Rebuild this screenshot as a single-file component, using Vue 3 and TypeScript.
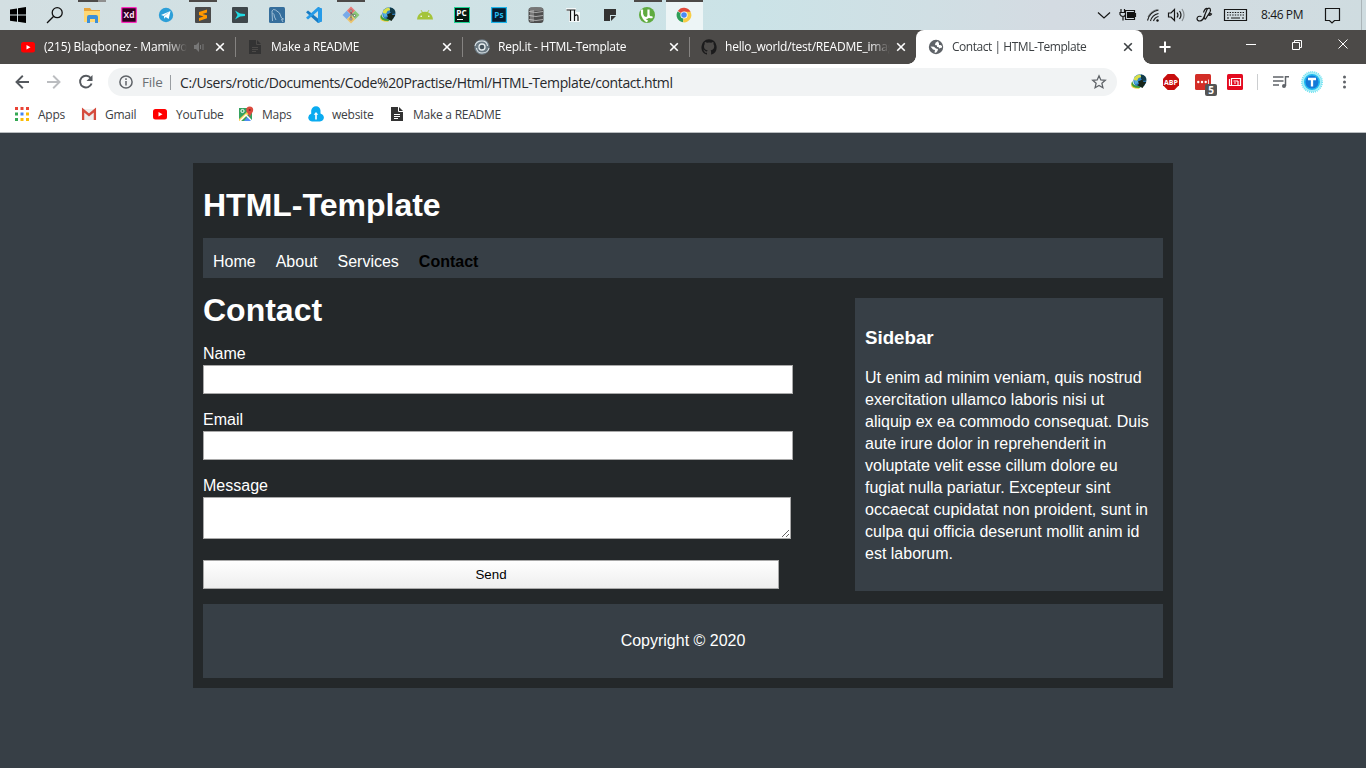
<script setup lang="ts">
interface Glyph {
  text: string
  x: number
  y: number
  size: number
  color: string
}

interface Tab {
  title: string
  icon: string
  active?: boolean
  audio?: boolean
  spacing: number
}

const taskbarIcons: { id: string; state?: string; glyph?: Glyph }[] = [
  { id: 'windows' },
  { id: 'search' },
  { id: 'folder', state: 'stacked' },
  { id: 'xd', glyph: { text: 'Xd', x: 3.6, y: 12.2, size: 8.5, color: '#ffd9f2' } },
  { id: 'telegram' },
  { id: 'sublime', state: 'open' },
  { id: 'filmora' },
  { id: 'mysql' },
  { id: 'vscode' },
  { id: 'git', state: 'open' },
  { id: 'idm' },
  { id: 'android' },
  { id: 'pycharm', glyph: { text: 'PC', x: 3.3, y: 9.6, size: 8.2, color: '#fff' } },
  { id: 'photoshop', glyph: { text: 'Ps', x: 4.3, y: 12, size: 8.2, color: '#25b8eb' } },
  { id: 'database' },
  { id: 'thonny' },
  { id: 'note' },
  { id: 'utorrent', state: 'open' },
  { id: 'chrome', state: 'focused' },
]

const tabs: Tab[] = [
  { title: '(215) Blaqbonez - Mamiwota', icon: 'youtube', audio: true, spacing: -0.2 },
  { title: 'Make a README', icon: 'doc', spacing: -0.24 },
  { title: 'Repl.it - HTML-Template', icon: 'replit', spacing: -0.25 },
  { title: 'hello_world/test/README_image', icon: 'github', spacing: -0.2 },
  { title: 'Contact | HTML-Template', icon: 'globe', active: true, spacing: -0.46 },
]

const bookmarks = [
  { label: 'Apps', icon: 'apps', width: 67 },
  { label: 'Gmail', icon: 'gmail', width: 71 },
  { label: 'YouTube', icon: 'youtube', width: 86 },
  { label: 'Maps', icon: 'maps', width: 70 },
  { label: 'website', icon: 'cloud', width: 81 },
  { label: 'Make a README', icon: 'doc', width: 130 },
]

const links = ['Home', 'About', 'Services', 'Contact']
</script>

<template>
  <div class="screen">
    <svg class="defs" aria-hidden="true">
      <symbol id="windows" viewBox="0 0 18 18">
        <path fill="#000" d="M1 3.500 8 2.400V8.600H1zM9 2.300 17 1v7.600H9zM1 9.500h7v6.200L1 14.700zM9 9.500h8V17l-8-1.200z" />
      </symbol>
      <symbol id="search" viewBox="0 0 18 18">
        <g fill="none" stroke="#111" stroke-width="1.300"><circle cx="11.200" cy="6.700" r="5" /><path d="M7.700 10.300 1 17" /></g>
      </symbol>
      <symbol id="folder" viewBox="0 0 18 18">
        <path fill="#e8a33a" d="M1 2h6l1.500 2H17v3H1z" />
        <path fill="#ffd874" d="M1 5h16v11H1z" />
        <path fill="#3c8fd8" d="M4 11q0-2 2-2h7q2 0 2 2v6h-3v-4H7v4H4z" />
      </symbol>
      <symbol id="xd" viewBox="0 0 18 18">
        <rect x="1.700" y="1.700" width="14.600" height="14.600" rx=".6" fill="#2e001e" stroke="#ff2bc2" stroke-width="1.200" />
      </symbol>
      <symbol id="telegram" viewBox="0 0 18 18">
        <circle cx="9" cy="9" r="7.200" fill="#2d9fd8" />
        <path fill="#fff" d="M4 9 13.500 5l-1.800 8-3-2-1.500 1.700-.2-2.700z" />
        <path fill="none" stroke="#9cc9e2" d="m7 10 4.500-3.500" stroke-width=".8" />
      </symbol>
      <symbol id="sublime" viewBox="0 0 18 18">
        <rect x="1" y="1" width="16" height="16" rx="1" fill="#4a4a4a" />
        <path fill="#ff9800" d="m5 6 8-2.500v3L8.500 8 13 9.300v3L5 15v-3l4.500-1.500L5 9z" />
      </symbol>
      <symbol id="filmora" viewBox="0 0 18 18">
        <rect x="1" y="1" width="16" height="16" rx="1" fill="#3e464a" />
        <path fill="#20dbe4" d="m4 4.500 5 3 5 .5v2l-5 .5-5 3 2.500-4.500z" />
      </symbol>
      <symbol id="mysql" viewBox="0 0 18 18">
        <rect x="1" y="1" width="16" height="16" rx="1.500" fill="#356e9c" />
        <path fill="none" stroke="#a8c5da" stroke-width=".9" d="M4.500 15 4 5Q5 2.500 7.500 4q5 2 6 8l2 1-2 .5 1.500 2.500M4.500 7q2 1 2 4l1.500 3" />
      </symbol>
      <symbol id="vscode" viewBox="0 0 18 18">
        <path fill="#187bc2" d="m13 1 4 1.800v12.400L13 17 1 6.200 3 4.500 13 12.500z" />
        <path fill="#269be8" d="m13 1 4 1.800v12.400L13 17V5L3 13.500l-2-1.700z" />
      </symbol>
      <symbol id="git" viewBox="0 0 18 18">
        <g transform="rotate(45 9 9)">
          <path fill="#e87878" d="M3 3h6v6H3z" /><path fill="#8ac978" d="M9 3h6v6H9z" />
          <path fill="#78aae8" d="M3 9h6v6H3z" /><path fill="#ecc46e" d="M9 9h6v6H9z" />
        </g>
        <path d="M9 4v10m0-7 3 2.500" fill="none" stroke="#555" stroke-width=".8" />
        <g fill="#fff" stroke="#555" stroke-width=".7"><circle cx="9" cy="5" r="1.100" /><circle cx="12.500" cy="9.500" r="1.100" /><circle cx="9" cy="13" r="1.100" /></g>
      </symbol>
      <symbol id="idm" viewBox="0 0 18 18">
        <circle cx="9.800" cy="7.800" r="6.500" fill="#2d7fc4" />
        <path fill="#d9df4a" d="M4 5Q6.500 1.500 10 1.500l1.500 2.500-3 1-1.500 3-3-.5z" />
        <path fill="#55aede" d="m4 7 4 1 1 2-4 1z" />
        <path fill="#f0cf38" d="M2 9q-.5 4 4 5l4 .8-1 1q-8 .2-8-4.300z" />
        <path fill="#3f9f38" d="M2.500 8Q2.500 12 7 13l4 .5L9.500 15Q1 15 1.500 10z" />
        <path fill="#123c4a" d="M11 1.500q5.500.5 5.500 6l-3 .5-2.500-2z" />
        <path fill="#17251a" d="m8 8.500 4.500-2 1 2.500 3-.3L12.500 15 7 12l2-1z" />
      </symbol>
      <symbol id="android" viewBox="0 0 18 18">
        <path fill="#a4c439" d="M1 13.500Q1.500 8 6 6.200L4.600 4.300l.6-.4L6.800 6q2.200-.7 4.400 0l1.600-2.100.6.400L12 6.200q4.500 1.800 5 7.300z" />
        <g fill="#fff"><circle cx="5.200" cy="10.300" r=".8" /><circle cx="12.800" cy="10.300" r=".8" /></g>
      </symbol>
      <symbol id="pycharm" viewBox="0 0 18 18">
        <rect x="1.500" y="1.500" width="15" height="15" fill="#071a12" stroke="#1fd494" />
        <path fill="#fff" d="M4 13h6v1H4z" />
      </symbol>
      <symbol id="photoshop" viewBox="0 0 18 18">
        <rect x="1.600" y="1.600" width="14.800" height="14.800" fill="#071d31" stroke="#1db6ec" stroke-width="1.200" />
      </symbol>
      <symbol id="database" viewBox="0 0 18 18">
        <rect x="1.500" y="1.500" width="15" height="15.500" rx="3" fill="#4e4e4e" />
        <path stroke="#aaa" stroke-width="1" fill="none" d="M2 5.500q7 2 14 0M2 9.500q7 2 14 0M2 13.500q7 2 14 0" />
        <ellipse cx="9" cy="3" rx="7.300" ry="2" fill="#777" /><path fill="#fff" opacity=".25" d="M3 4h4v12H3z" />
      </symbol>
      <symbol id="thonny" viewBox="0 0 18 18">
        <path fill="#fff" d="M2 2h10v4h4v10H5V5H2z" opacity=".8" />
        <path fill="none" stroke="#111" stroke-width="1.200" d="M2.500 4h9M6.500 4v11M10.500 4v11m0-5q3.500-2.500 3.500 1v4" />
      </symbol>
      <symbol id="note" viewBox="0 0 18 18">
        <path fill="#333" d="M3 3h12v6H9v6H3z" /><path fill="#333" d="M10 10h5l-5 5z" />
      </symbol>
      <symbol id="utorrent" viewBox="0 0 18 18">
        <circle cx="9" cy="9" r="8" fill="#5fab40" />
        <path fill="none" stroke="#fff" stroke-width="2.200" d="M4 3.500V8q.5 4 4 4 2.500 0 2.500-3V3.500M10.500 9q.5 3 4 2M4.500 9q1 4.500 5 6.500" />
      </symbol>
      <symbol id="chrome" viewBox="0 0 18 18">
        <path fill="#e24a3b" d="M9 9 2.800 5A7.300 7.300 0 0 1 15.600 6z" />
        <path fill="#2f9e58" d="M9 9 8 16.200A7.300 7.300 0 0 1 2.500 5.400z" />
        <path fill="#f7cd45" d="M9 9 9 5.700h6.500A7.300 7.300 0 0 1 8 16.300z" />
        <circle cx="9" cy="9" r="3.600" fill="#fff" /><circle cx="9" cy="9" r="2.800" fill="#4a8af4" />
      </symbol>
      <symbol id="youtube" viewBox="0 0 16 16">
        <rect x="1" y="3" width="14" height="10.500" rx="2.500" fill="#f00" /><path fill="#fff" d="m6.500 6 4 2.250-4 2.250z" />
      </symbol>
      <symbol id="doc" viewBox="0 0 16 16">
        <path fill="#333" d="M2 1h8l4 4v10H2z" /><path fill="none" stroke="var(--paper, #fff)" d="M9.500 1v4.500H14M5 8.500h6M5 10.500h6M5 12.500h4" />
      </symbol>
      <symbol id="replit" viewBox="0 0 16 16">
        <circle cx="8" cy="8" r="7.700" fill="#6a7983" />
        <g fill="none" stroke="#dfe6ea" stroke-width="1.100"><path d="M1 7Q2 2 8 2q5 0 5.500 5M15 9q-1 5-7 5-5 0-5.500-5" /></g>
        <circle cx="8" cy="8" r="3" fill="#44525c" stroke="#e8eef0" stroke-width="1.300" />
      </symbol>
      <symbol id="github" viewBox="0 0 16 16">
        <path fill="#1b1b1c" d="M8 .2a8 8 0 0 0-2.500 15.400c.4.1.5-.2.500-.4v-1.500c-2 .4-2.500-.9-2.600-1.300-.1-.2-.5-.9-.9-1.100-.3-.2-.7-.6 0-.6s1.100.6 1.300.9c.7 1.200 1.900.9 2.400.7.100-.5.300-.9.500-1.100-1.800-.2-3.700-.9-3.700-4 0-.9.300-1.600.8-2.100-.1-.2-.4-1 .100-2.100 0 0 .7-.2 2.200.8a7.600 7.600 0 0 1 4 0c1.500-1 2.200-.8 2.200-.8.500 1.100.2 1.900.1 2.100.5.500.8 1.200.8 2.100 0 3.100-1.900 3.800-3.700 4 .3.300.6.800.6 1.500v2.500c0 .2.100.5.500.4A8 8 0 0 0 8 .2" />
      </symbol>
      <symbol id="globe" viewBox="0 0 16 16">
        <circle cx="8" cy="8" r="7.200" fill="#5f6368" />
        <path fill="#fff" d="M10 2.300 7.500 3.800 7 6l2 .5V8h1.500L11 9.500l3-1V7l-1.500-1H11V4.500zM2.500 7.500 6 7.800l2 1.700 2 .5-.5 2L8 13.800l-1.500-.3L7 11 5 10.500z" />
      </symbol>
      <symbol id="apps" viewBox="0 0 16 16">
        <path fill="#ea4335" d="M1 1h3v3H1zM6.500 1h3v3h-3zM12 1h3v3h-3z" />
        <path fill="#34a853" d="M1 6.500h3v3H1zM1 12h3v3H1z" /><path fill="#4285f4" d="M6.500 6.500h3v3h-3z" />
        <path fill="#fbbc05" d="M12 6.500h3v3h-3zM6.500 12h3v3h-3zM12 12h3v3h-3z" />
      </symbol>
      <symbol id="gmail" viewBox="0 0 16 16">
        <path fill="#eee" d="M1 3h14v11H1z" /><path fill="none" stroke="#d54b3d" stroke-width="2.300" d="M2.100 14V4L8 9l5.900-5v10" />
      </symbol>
      <symbol id="maps" viewBox="0 0 16 16">
        <path fill="#35a261" d="M1 2h13v13H1z" /><path fill="#4f8df5" d="m6 15 4-5 4 5z" /><path fill="#f5d050" d="m1 13 9-8 2 2-9 8H1z" />
        <path fill="none" stroke="#fff" stroke-width="1.300" d="m2 15 6-6 6 6" /><circle cx="4.500" cy="5" r="1.600" fill="none" stroke="#fff" />
        <path fill="#dd4b3e" d="M8.200 4a3.500 3.500 0 0 1 7 0q0 2-2 4l-1.500 3-1.500-3q-2-2-2-4" /><circle cx="11.700" cy="4" r="1.100" fill="#8a2924" />
      </symbol>
      <symbol id="cloud" viewBox="0 0 16 16">
        <path fill="#0aabf0" d="M4 15.500q-3.500-.5-3.800-4 .3-3 3-3.800V4.500Q4 .5 8 .3q4 .2 4.500 4.200v3q3.200 1 3.400 4-.2 3.500-4 4z" />
        <path fill="#fff" d="M8 6 10.300 8.800H8.800v4.700H7.200V8.800H5.700z" />
      </symbol>
    </svg>

    <header class="taskbar">
      <div class="launchers">
        <span v-for="item in taskbarIcons" :key="item.id" class="launcher" :class="item.state">
          <svg width="18" height="18" viewBox="0 0 18 18">
            <use :href="'#' + item.id" />
            <text v-if="item.glyph" class="glyph" :x="item.glyph.x" :y="item.glyph.y" :font-size="item.glyph.size" :fill="item.glyph.color">{{ item.glyph.text }}</text>
          </svg>
        </span>
      </div>
      <div class="tray">
        <svg width="242" height="30" viewBox="1094 0 242 30" fill="none" stroke="#161616" stroke-width="1.200">
          <path d="m1098 12.500 6 5.500 6-5.500" />
          <path d="M1125.500 10.500h9v9h-9zM1135.500 13v4M1121 9v3M1124.500 9v3M1120 12.500h5.500v2q-.5 2-2.500 2t-3-2zM1123 16.500v4" />
          <path fill="#111" stroke="none" d="M1127 12h7v6h-7z" />
          <g stroke-width="1.100"><path d="M1147.500 20.500q2-8.500 11-10.500M1150.500 21q1.500-6 8-7.500M1153.500 21q1-3.500 5-4.500" /><path d="M1148 17q3-6 9.500-7.500" opacity=".5" /></g>
          <circle cx="1157.500" cy="20.500" r="1.200" fill="#111" stroke="none" />
          <path d="M1168.500 13h2.500l3.500-3.500v11L1171 17h-2.500zM1177 12.500q2 2.500 0 5M1179.500 11q3 4 0 8" /><path opacity=".4" d="M1182 9q4 6 0 12" />
          <path d="M1201.500 16.500q-4-1-4.500 2 0 2.500 3 2.500 3-.5 4-4l3-7.500q1.500-2 3-1 1 1.500 0 3.500l-4.500 7-1.500-.5 1-4M1203.500 12.500q1.500-4.500 4-4M1208.500 15q1.500-2 3-1-1 2-3 1" />
          <path d="M1224.500 9.500h22v11h-22z" />
          <path stroke-dasharray="1.400 1.200" d="M1227 12.500h17M1227 15h17" /><path d="M1227 18h2m2 0h9m2 0h2" />
          <text class="clock" x="1261" y="19.400" fill="#171717" stroke="none">8:46 PM</text>
          <path d="M1325.500 8.500h14v12h-5l-2.500 2.500-2.500-2.500h-4z" />
        </svg>
        <i class="desktop-edge"></i>
      </div>
    </header>

    <div class="tabstrip">
      <div v-for="tab in tabs" :key="tab.title" class="tab" :class="{ active: tab.active, sounding: tab.audio }">
        <svg class="favicon" width="16" height="16"><use :href="'#' + tab.icon" /></svg>
        <span class="title" :style="{ letterSpacing: tab.spacing + 'px' }">{{ tab.title }}</span>
        <svg v-if="tab.audio" class="audio" width="12" height="12" viewBox="0 0 12 12">
          <path fill="#777" d="M0 4h2l3-3v10L2 8H0z" /><path fill="none" stroke="#777" d="M6.500 4v4M9 3v6" />
        </svg>
        <svg class="close" width="10" height="10" viewBox="0 0 10 10"><path d="m1.200 1.200 7.600 7.600m0-7.600L1.200 8.800" /></svg>
      </div>
      <svg class="new-tab" width="14" height="14" viewBox="0 0 14 14"><path d="M7 1.500v11M1.500 7h11" /></svg>
      <svg class="window-controls" width="108" height="28" viewBox="0 0 108 28" fill="none" stroke="#fff">
        <path d="M0 11.500h10M46.500 9.500h7v7h-7zM48.500 9.500v-2h7v7h-2M92.500 6.500l9 9m0-9-9 9" />
      </svg>
    </div>

    <div class="toolbar">
      <svg class="nav-icons" width="108" height="36" viewBox="0 0 108 36" fill="none" stroke="#55595e" stroke-width="1.900">
        <path d="M29 18H16.500m6.300-6.200L16.500 18l6.300 6.200" />
        <path stroke="#bbbdc0" d="M47 18h12.500m-6.300-6.200 6.300 6.200-6.300 6.200" />
        <path d="M90.700 14a5.900 5.900 0 1 0 .9 5.500" /><path fill="#55595e" stroke="none" d="M92.500 11v6h-6z" />
      </svg>
      <div class="omnibox">
        <svg width="14" height="14" viewBox="0 0 14 14" fill="none" stroke="#5f6368" stroke-width="1.500"><circle cx="7" cy="7" r="6.100" /><path d="M7 6v4.500M7 3.300v1.600" /></svg>
        <span class="scheme">File</span>
        <span class="url">C:/Users/rotic/Documents/Code%20Practise/Html/HTML-Template/contact.html</span>
        <svg class="star" width="16" height="16" viewBox="0 0 16 16"><path fill="none" stroke="#5f6368" stroke-width="1.300" d="m8 1.800 1.800 4.100 4.500.4-3.400 3 1 4.400L8 11.400l-3.900 2.300 1-4.400-3.400-3 4.500-.4z" /></svg>
      </div>
      <div class="extensions">
        <svg width="18" height="18"><use href="#idm" /></svg>
        <svg width="18" height="18" viewBox="0 0 18 18"><path fill="#c70d0d" d="M5.700 1h6.600L17 5.700v6.600L12.300 17H5.700L1 12.300V5.700z" /><text x="2" y="11.800" class="glyph" font-size="7.600" fill="#fff" textLength="14" lengthAdjust="spacingAndGlyphs">ABP</text></svg>
        <span class="lastpass">
          <svg width="18" height="18" viewBox="0 0 18 18"><rect x="1" y="1" width="16" height="16" rx="1.500" fill="#d32d27" /><g fill="#fff"><circle cx="4.300" cy="9" r="1.200" /><circle cx="8" cy="9" r="1.200" /><circle cx="11.700" cy="9" r="1.200" /><path d="M14 6.500h.8v5H14z" /></g></svg>
          <b class="badge">5</b>
        </span>
        <svg width="18" height="18" viewBox="0 0 18 18"><rect x="1" y="1" width="16" height="16" rx="1.500" fill="#e40b20" /><path fill="none" stroke="#fff" stroke-width="1.200" d="M3.500 6v6.500h11v-7H5.500V12M7.500 8H12M12 8v4M8 10h2" /></svg>
      </div>
      <i class="divider"></i>
      <svg class="tools" width="88" height="26" viewBox="0 0 88 26" fill="none" stroke="#5f6368" stroke-width="1.500">
        <path d="M1 8h10.500M1 12h10.500M1 16h6M13.500 17V7.800H17" /><circle cx="12" cy="17" r="2" fill="#5f6368" stroke="none" />
        <circle cx="40" cy="13" r="10.200" fill="#a5eef7" stroke="#6be0f0" stroke-dasharray="1 1" /><circle cx="40" cy="13" r="7.300" fill="#1479d8" stroke="#20baf0" />
        <path stroke="#fff" stroke-width="2.300" d="M36 10h8M40 10v7.500" />
        <g fill="#5f6368" stroke="none"><circle cx="72.500" cy="8" r="1.500" /><circle cx="72.500" cy="13" r="1.500" /><circle cx="72.500" cy="18" r="1.500" /></g>
      </svg>
    </div>

    <div class="bookmarks">
      <span v-for="mark in bookmarks" :key="mark.label" class="bookmark" :style="{ width: mark.width + 'px' }">
        <svg width="16" height="16"><use :href="'#' + mark.icon" /></svg>{{ mark.label }}
      </span>
    </div>

    <main class="page">
      <div class="container">
        <h1>HTML-Template</h1>
        <nav>
          <a v-for="link in links" :key="link" :class="{ current: link === 'Contact' }">{{ link }}</a>
        </nav>
        <div class="columns">
          <section class="content">
            <h1>Contact</h1>
            <form @submit.prevent>
              <label for="name">Name</label>
              <input id="name" type="text" />
              <label for="email">Email</label>
              <input id="email" type="text" />
              <label for="message">Message</label>
              <textarea id="message"></textarea>
              <button type="submit">Send</button>
            </form>
          </section>
          <aside>
            <h3>Sidebar</h3>
            <p>Ut enim ad minim veniam, quis nostrud exercitation ullamco laboris nisi ut aliquip ex ea commodo consequat. Duis aute irure dolor in reprehenderit in voluptate velit esse cillum dolore eu fugiat nulla pariatur. Excepteur sint occaecat cupidatat non proident, sunt in culpa qui officia deserunt mollit anim id est laborum.</p>
          </aside>
        </div>
        <footer><p>Copyright © 2020</p></footer>
      </div>
    </main>
  </div>
</template>

<style>
body { overflow: hidden; }
</style>

<style scoped>
.screen { position: relative; display: flex; flex-direction: column; width: 1366px; height: 768px; overflow: hidden; font: 12px "Open Sans", "Noto Sans", sans-serif; }
.screen svg { display: block; flex: none; }
.screen .defs { position: absolute; width: 0; height: 0; }
.glyph { font-family: "Open Sans", sans-serif; font-weight: 700; }
.taskbar { display: flex; flex: none; justify-content: space-between; height: 30px; background: linear-gradient(90deg, #d3dfe2 0, #d0e2e5 30%, #cbe3e7 55%, #d0dfe4 68%, #d4dbe2 77%, #cfdce0 100%); }
.launchers { display: flex; margin-left: -1px; }
.launcher { display: flex; align-items: center; justify-content: center; width: 37.060px; height: 30px; }
.open, .stacked, .focused { background: linear-gradient(#4d4a48, #4d4a48) 5px 0 / 28px 2px no-repeat; }
.stacked { background: linear-gradient(90deg, #4d4a48 20px, #8f8f8f 20px) 5px 0 / 28px 2px no-repeat; }
.focused { background: linear-gradient(#4d4a48, #4d4a48) 0 0 / 100% 2px no-repeat, #edf5f6; }
.tray { display: flex; width: 272px; }
.tray svg { overflow: visible; }
.clock { font-size: 12px; letter-spacing: -.4px; }
.desktop-edge { width: 1px; height: 30px; margin-left: 25px; background: #abb5b9; }
.tabstrip { display: flex; flex: none; align-items: center; height: 34px; padding-left: 8px; background: #4c4a48; }
.tab { --paper: #4c4a48; position: relative; display: flex; flex: none; align-items: center; box-sizing: border-box; width: 227px; height: 34px; padding-left: 12px; color: #fff; }
.tab::after { position: absolute; right: -1px; width: 1px; height: 20px; background: #858381; content: ""; }
.tab:nth-child(4)::after, .tab.active::after { display: none; }
.title { width: 165px; margin-left: 8px; overflow: hidden; line-height: 16px; white-space: nowrap; mask-image: linear-gradient(90deg, #000 145px, transparent); }
.sounding .title { width: 143px; mask-image: linear-gradient(90deg, #000 123px, transparent); }
.audio { margin: 0 0 0 7px; }
.close { margin-left: 5.500px; fill: none; stroke: #fff; stroke-width: 1.600; }
.sounding .close { margin-left: 9px; }
.active { border-radius: 8px 8px 0 0; background: #fff; color: #3c4043; }
.active .close { stroke: #3c4043; }
.active::before { position: absolute; right: -8px; bottom: 0; left: -8px; height: 8px; background: radial-gradient(circle at 0 0, transparent 7.500px, #fff 8px) 0 0 / 8px 8px no-repeat, radial-gradient(circle at 100% 0, transparent 7.500px, #fff 8px) 100% 0 / 8px 8px no-repeat; content: ""; }
.new-tab { margin-left: 15px; fill: none; stroke: #fff; stroke-width: 2; }
.window-controls { margin-left: 74px; }
.toolbar { display: flex; flex: none; align-items: center; height: 36px; background: #fff; }
.omnibox { display: flex; align-items: center; box-sizing: border-box; width: 1009px; height: 28px; padding: 0 10px 0 11px; border-radius: 14px; background: #f1f3f4; font-size: 14px; }
.scheme { box-sizing: border-box; width: 29px; margin-left: 9px; border-right: 1px solid #999da1; color: #6b6f73; font-size: 13.500px; letter-spacing: -.15px; line-height: 15px; }
.url { margin-left: 9px; color: #27292c; letter-spacing: -.385px; white-space: nowrap; }
.star { margin-left: auto; }
.extensions { display: flex; gap: 14px; margin-left: 13px; }
.lastpass { position: relative; }
.badge { position: absolute; top: 11px; left: 11px; width: 12px; height: 12px; border-radius: 2px; background: #555; color: #fff; font-size: 10px; line-height: 12px; text-align: center; }
.divider { width: 1px; height: 16px; margin: 0 14px 0 13px; background: #ccced0; }
.bookmarks { display: flex; flex: none; align-items: center; box-sizing: border-box; height: 33px; padding: 0 0 4px 14px; border-bottom: 1px solid #b9bdc0; background: #fff; color: #3c4043; letter-spacing: -.25px; }
.bookmark { display: flex; flex: none; gap: 8px; align-items: center; white-space: nowrap; }
.page { flex: 1; padding-top: 30px; background: #373f46; color: #fff; font: 16px/22px "Liberation Sans", Arial, sans-serif; }
.container { display: flow-root; box-sizing: border-box; width: 980px; height: 525px; margin: 0 auto; padding: 0 10px; background: #24282a; }
h1 { margin: 31.440px 0 21.440px; font-size: 32px; line-height: 22px; }
nav { display: flex; gap: 20px; box-sizing: border-box; height: 40px; padding: 13px 10px 0; background: #373f46; }
.current { color: #000; font-weight: 700; }
.columns { display: flex; justify-content: space-between; height: 326px; }
.content { width: 590px; }
.content h1 { margin: 21px 0 22.300px; }
form { display: flex; flex-direction: column; align-items: flex-start; }
input, textarea, button { box-sizing: border-box; margin: 0; border: 1px solid #a9a9a9; border-radius: 0; }
input { width: 590px; height: 29px; margin-bottom: 15px; background: #fff; }
textarea { width: 588px; height: 42px; margin-bottom: 21px; background: #fff; }
button { width: 576px; height: 29px; background: linear-gradient(#fff, #eee); color: #000; font: 13.333px "Liberation Sans", Arial, sans-serif; }
aside { box-sizing: border-box; width: 308px; height: 293px; margin-top: 20px; padding: 10px; background: #373f46; }
h3 { margin: 18.720px 0; font-size: 18.720px; line-height: 22px; }
p { margin: 0; }
footer { display: flex; align-items: center; justify-content: center; height: 74px; background: #373f46; }
</style>
